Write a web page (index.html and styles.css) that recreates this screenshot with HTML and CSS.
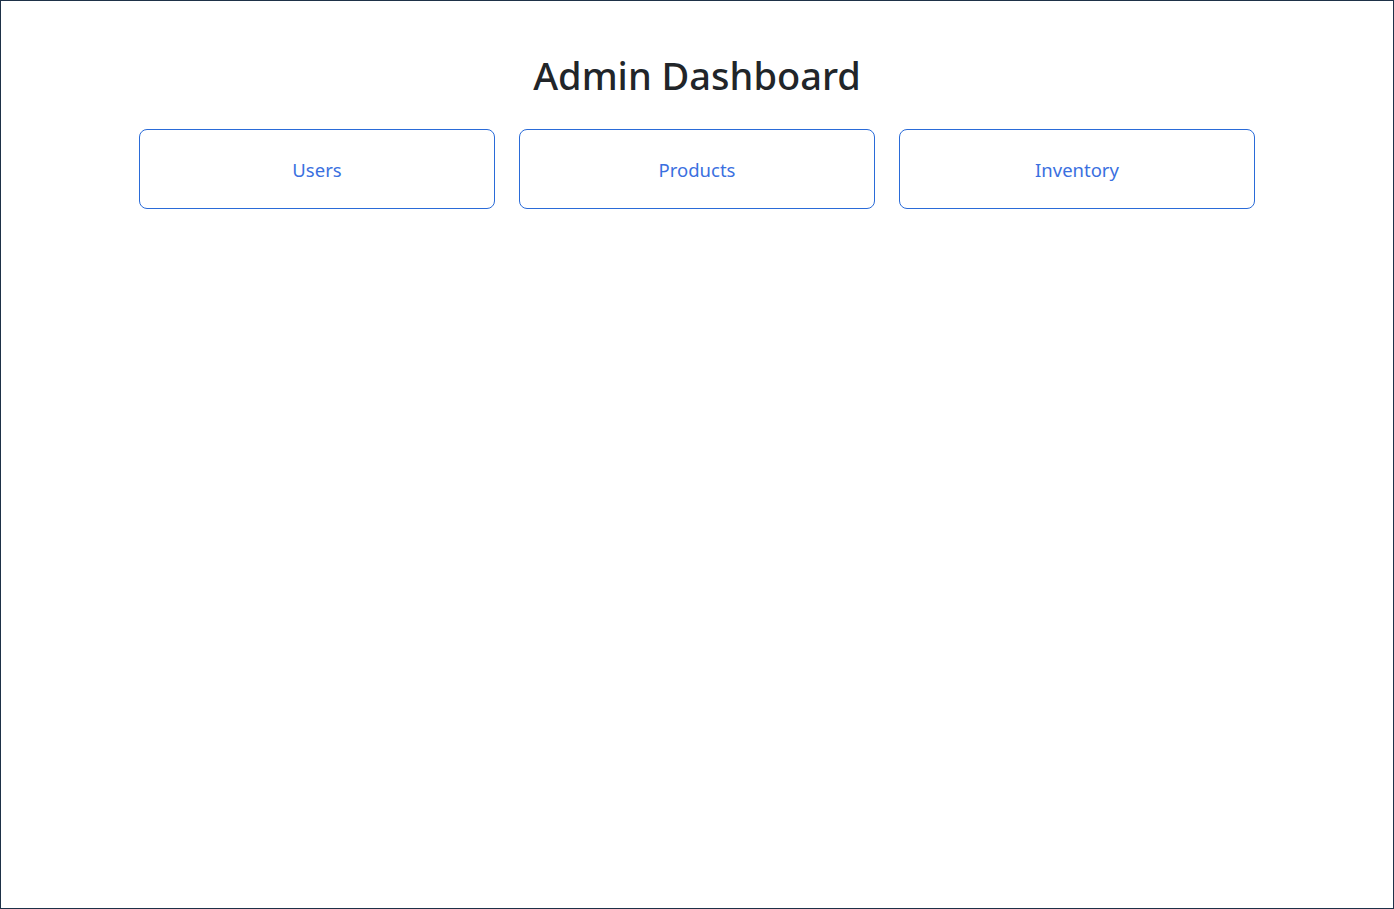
FILE: index.html
```html
<!DOCTYPE html>
<html lang="en">
<head>
<meta charset="utf-8">
<title>Admin Dashboard</title>
<link rel="stylesheet" href="styles.css">
</head>
<body>
<div class="frame">
  <div class="container">
    <h1 class="title">Admin Dashboard</h1>
    <div class="grid">
      <a class="tile" href="#">Users</a>
      <a class="tile" href="#">Products</a>
      <a class="tile" href="#">Inventory</a>
    </div>
  </div>
</div>
</body>
</html>
```

FILE: styles.css
```css
* { box-sizing: border-box; }
html, body { margin: 0; padding: 0; }
body {
  font-family: "Noto Sans", "Open Sans", "Liberation Sans", sans-serif;
  color: #212529;
  background: #fff;
}
.frame {
  height: 100vh;
  border: 1px solid #1e3148;
}
.container {
  width: 1116px;
  margin: 0 auto;
  padding-top: 50px;
}
.title {
  margin: 0 0 30px;
  font-size: 38px;
  line-height: 48px;
  font-weight: 500;
  text-align: center;
}
.grid {
  display: grid;
  grid-template-columns: repeat(3, 1fr);
  gap: 24px;
}
.tile {
  display: block;
  height: 80px;
  line-height: 80px;
  border: 1px solid #2a6bd8;
  border-radius: 8px;
  color: #3a70e0;
  text-decoration: none;
  text-align: center;
  font-size: 18.5px;
}
```
